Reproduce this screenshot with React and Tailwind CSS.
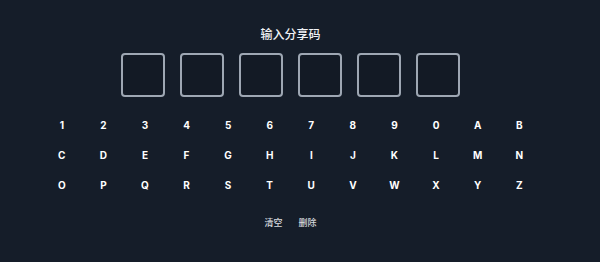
import React from "react";

const rows = [
  ["1", "2", "3", "4", "5", "6", "7", "8", "9", "0", "A", "B"],
  ["C", "D", "E", "F", "G", "H", "I", "J", "K", "L", "M", "N"],
  ["O", "P", "Q", "R", "S", "T", "U", "V", "W", "X", "Y", "Z"],
];

export default function App() {
  return (
    <div className="w-[600px] h-[262px] bg-[#151d29] overflow-hidden" style={{ fontFamily: "Inter, 'Noto Sans CJK SC', sans-serif" }}>
      <div className="w-[581px] flex flex-col items-center">
        <div className="pt-[26px] h-[42px] text-[12px] leading-[16px] font-medium text-[#f0f2f5]" style={{ fontFamily: "'Noto Sans CJK SC', sans-serif" }}>
          输入分享码
        </div>
        <div className="mt-[11px] flex gap-[15px]">
          {Array.from({ length: 6 }).map((_, i) => (
            <div key={i} className="w-[44px] h-[44px] rounded-[4px] border-2 border-[#9ea7b3] bg-[#131a25]" />
          ))}
        </div>
        <div className="mt-[13px] w-[499px] grid grid-cols-12">
          {rows.flat().map((k) => (
            <button key={k} className="h-[30px] flex items-center justify-center text-[10px] font-bold text-white leading-none">
              {k}
            </button>
          ))}
        </div>
        <div className="mt-[15px] flex gap-[16px] text-[9px] leading-[16px] font-medium text-[#d5d9de]" style={{ fontFamily: "'Noto Sans CJK SC', sans-serif" }}>
          <button>清空</button>
          <button>删除</button>
        </div>
      </div>
    </div>
  );
}
